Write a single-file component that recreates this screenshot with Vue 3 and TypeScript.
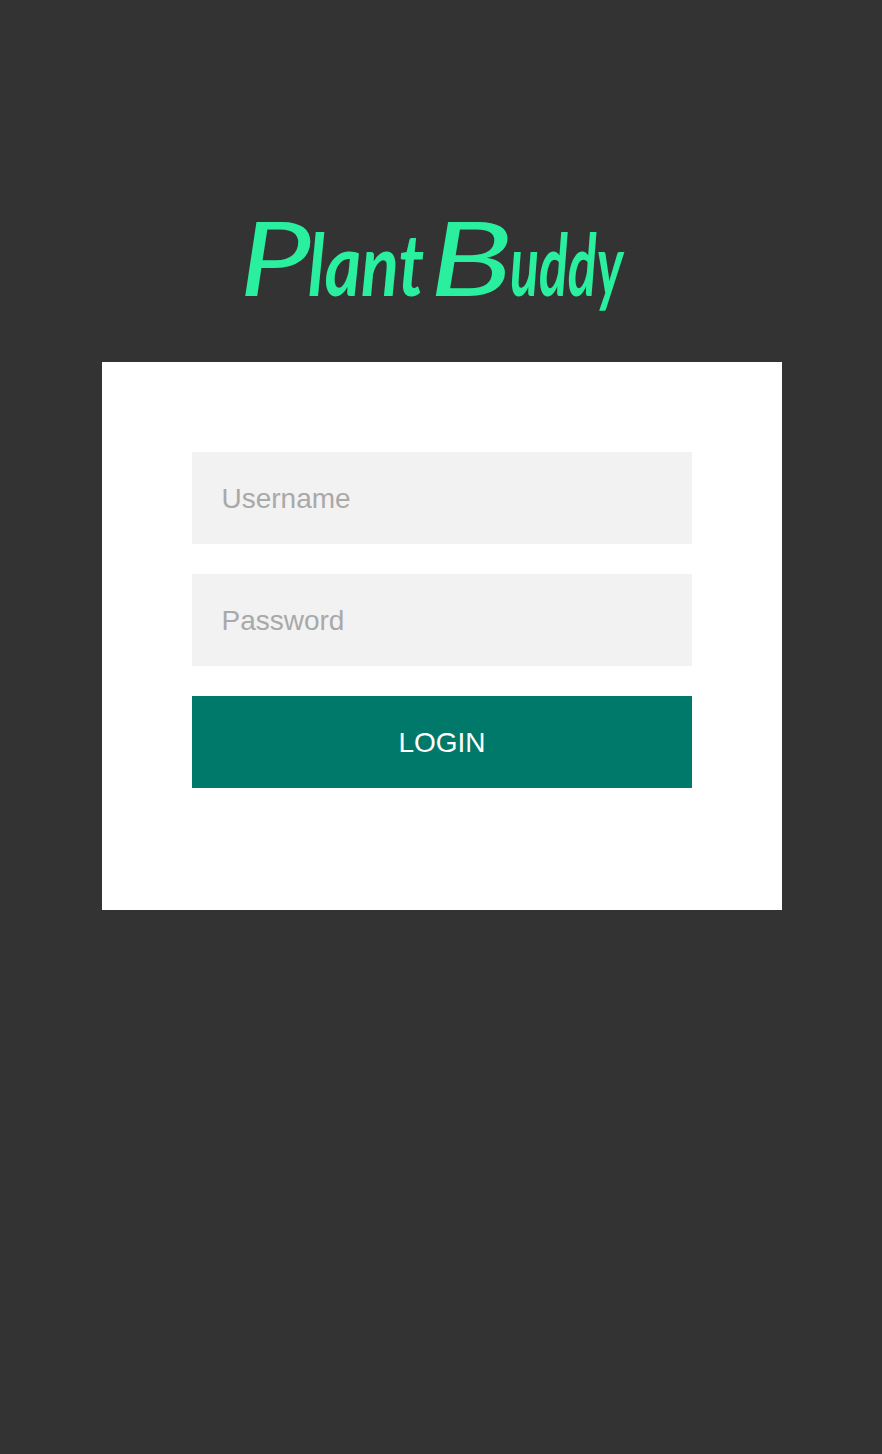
<script setup lang="ts">
import { ref } from 'vue'

const username = ref('')
const password = ref('')
</script>

<template>
  <main class="page">
    <h1 class="brand">
      <svg class="wordmark" viewBox="0 0 384 110" role="img" aria-label="Plant Buddy">
        <text class="word" y="76"><tspan class="capital" x="-2" textLength="72" lengthAdjust="spacingAndGlyphs">P</tspan><tspan x="67" textLength="116" lengthAdjust="spacingAndGlyphs">lant</tspan> <tspan class="capital" x="188" textLength="84" lengthAdjust="spacingAndGlyphs">B</tspan><tspan x="269" textLength="113" lengthAdjust="spacingAndGlyphs">uddy</tspan></text>
      </svg>
    </h1>
    <form class="card" @submit.prevent>
      <input v-model="username" class="field" type="text" placeholder="Username" />
      <input v-model="password" class="field" type="password" placeholder="Password" />
      <button class="login" type="submit">LOGIN</button>
    </form>
  </main>
</template>

<style>
body {
  margin: 0;
  background: #333333;
}
</style>

<style scoped>
.page {
  box-sizing: border-box;
  min-height: 1454px;
  padding: 220px 100px 0 102px;
  background: #333333;
  font-family: "Liberation Sans", Arial, sans-serif;
}
.brand {
  display: flex;
  height: 142px;
  margin: 0;
  padding-left: 139px;
}
.wordmark {
  width: 384px;
  height: 110px;
  overflow: visible;
}
.word {
  font-family: Lato, cursive;
  font-size: 86px;
  font-style: italic;
  font-weight: 700;
  fill: #2aef9e;
}
.capital {
  font-size: 102px;
  font-weight: 400;
}
.card {
  box-sizing: border-box;
  display: flex;
  flex-direction: column;
  gap: 30px;
  width: 680px;
  height: 548px;
  padding: 90px;
  background: #ffffff;
}
.field,
.login {
  box-sizing: border-box;
  width: 100%;
  height: 92px;
  margin: 0;
  border: 0;
  border-radius: 0;
  outline: 0;
  font-family: inherit;
  font-size: 28px;
}
.field {
  padding: 2px 30px 0 29.5px;
  background: #f2f2f2;
  color: #333333;
}
.field::placeholder {
  color: #a9a9a9;
  opacity: 1;
}
.login {
  padding: 2px 0 0;
  background: #00796b;
  color: #ffffff;
}
</style>
